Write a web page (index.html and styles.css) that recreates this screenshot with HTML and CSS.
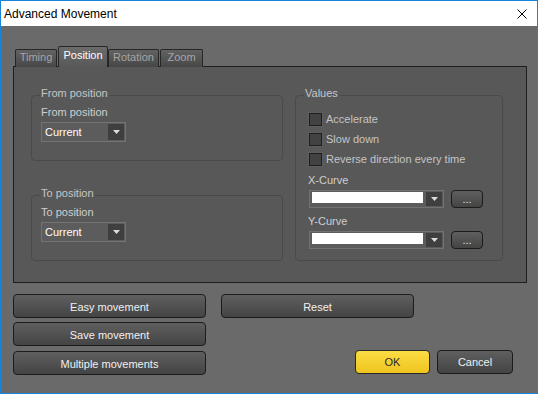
FILE: index.html
```html
<!DOCTYPE html>
<html>
<head>
<meta charset="utf-8">
<link rel="stylesheet" href="styles.css">
</head>
<body>
<div class="window">
  <div class="titlebar">
    <span class="title">Advanced Movement</span>
    <svg class="close" width="10" height="10" viewBox="0 0 10 10"><path d="M0.5 0.5L9.5 9.5M9.5 0.5L0.5 9.5" stroke="#000" stroke-width="1" fill="none"/></svg>
  </div>
  <div class="content">
    <div class="tabs">
      <div class="tab tab-timing">Timing</div>
      <div class="tab tab-position active">Position</div>
      <div class="tab tab-rotation">Rotation</div>
      <div class="tab tab-zoom">Zoom</div>
    </div>
    <div class="panel">
      <div class="col-left">
        <div class="group g-pos">
          <div class="legend">From position</div>
          <div class="label">From position</div>
          <div class="dropdown">
            <span class="dd-text">Current</span>
            <span class="dd-arrow"><svg width="7" height="4" viewBox="0 0 7 4"><path d="M0 0H7L3.5 4Z" fill="#dcdcdc"/></svg></span>
          </div>
        </div>
        <div class="group g-pos">
          <div class="legend">To position</div>
          <div class="label">To position</div>
          <div class="dropdown">
            <span class="dd-text">Current</span>
            <span class="dd-arrow"><svg width="7" height="4" viewBox="0 0 7 4"><path d="M0 0H7L3.5 4Z" fill="#dcdcdc"/></svg></span>
          </div>
        </div>
      </div>
      <div class="group g-values">
        <div class="legend legend-values">Values</div>
        <div class="checks">
          <div class="check-row"><span class="checkbox"></span><span class="check-label">Accelerate</span></div>
          <div class="check-row"><span class="checkbox"></span><span class="check-label">Slow down</span></div>
          <div class="check-row"><span class="checkbox"></span><span class="check-label">Reverse direction every time</span></div>
        </div>
        <div class="label curve-label">X-Curve</div>
        <div class="curve-row">
          <div class="combo">
            <span class="combo-field"><span class="combo-white"></span></span>
            <span class="dd-arrow combo-arrow"><svg width="7" height="4" viewBox="0 0 7 4"><path d="M0 0H7L3.5 4Z" fill="#dcdcdc"/></svg></span>
          </div>
          <div class="btn btn-dots">...</div>
        </div>
        <div class="label curve-label curve-label-y">Y-Curve</div>
        <div class="curve-row">
          <div class="combo">
            <span class="combo-field"><span class="combo-white"></span></span>
            <span class="dd-arrow combo-arrow"><svg width="7" height="4" viewBox="0 0 7 4"><path d="M0 0H7L3.5 4Z" fill="#dcdcdc"/></svg></span>
          </div>
          <div class="btn btn-dots">...</div>
        </div>
      </div>
    </div>
    <div class="buttons">
      <div class="btn-row">
        <div class="btn btn-wide">Easy movement</div>
        <div class="btn btn-wide">Reset</div>
      </div>
      <div class="btn-row row-2">
        <div class="btn btn-wide">Save movement</div>
      </div>
      <div class="btn-row row-3">
        <div class="btn btn-wide">Multiple movements</div>
        <div class="btn btn-ok">OK</div>
        <div class="btn btn-cancel">Cancel</div>
      </div>
    </div>
  </div>
</div>
</body>
</html>
```
FILE: styles.css
```css
* { box-sizing: border-box; }
html, body { margin: 0; padding: 0; }
body {
  width: 538px;
  height: 394px;
  overflow: hidden;
  font-family: "Liberation Sans", Arial, sans-serif;
  font-size: 11px;
}
.window {
  width: 538px;
  height: 394px;
  border: 1px solid #1883d7;
  background: #6a6a6a;
  display: flex;
  flex-direction: column;
}
.titlebar {
  height: 25px;
  flex: none;
  background: #fff;
  display: flex;
  align-items: center;
  justify-content: space-between;
  padding: 0 10px 0 3px;
}
.title {
  font-size: 12px;
  color: #000;
  line-height: 16px;
}
.close { display: block; margin-top: 1px; }
.content {
  flex: 1;
  padding: 20px 10px 0 12px;
}
.tabs {
  display: flex;
  align-items: flex-end;
  height: 21px;
  margin-bottom: -1px;
  padding-left: 2px;
  position: relative;
  z-index: 1;
}
.tab {
  height: 18px;
  border: 1px solid #262626;
  border-bottom: none;
  border-radius: 2px 2px 0 0;
  background: linear-gradient(#626262, #474747);
  color: #a6a6a6;
  text-align: center;
  line-height: 15px;
}
.tab-timing { width: 42px; margin-right: 1px; }
.tab-position { width: 50px; }
.tab-rotation { width: 51px; margin-right: 1px; }
.tab-zoom { width: 43px; }
.tab.active {
  height: 21px;
  color: #fff;
  background: linear-gradient(#6b6b6b, #585858);
  line-height: 17px;
}
.panel {
  height: 217px;
  border: 1px solid #1e1e1e;
  background: #585858;
  display: flex;
  gap: 12px;
  padding: 28px 0 0 17px;
}
.col-left {
  width: 252px;
  display: flex;
  flex-direction: column;
  gap: 34px;
}
.group {
  border: 1px solid #4a4a4a;
  border-radius: 4px;
}
.g-pos {
  height: 66px;
  padding: 0 9px;
}
.legend {
  width: max-content;
  margin: -9px 0 0 -1px;
  padding: 0 1px;
  background: #585858;
  line-height: 13px;
  color: #c6c6c6;
}
.label {
  margin-top: 6px;
  line-height: 13px;
  color: #cfcfcf;
}
.dropdown {
  margin-top: 3px;
  width: 85px;
  height: 20px;
  border: 1px solid #747474;
  padding: 1px;
  display: flex;
  background: #5c5c5c;
}
.dd-text {
  flex: 1;
  padding-left: 2px;
  line-height: 16px;
  color: #fff;
}
.dd-arrow {
  width: 16px;
  background: #3f3f3f;
  display: flex;
  align-items: center;
  justify-content: center;
}
.dd-arrow svg { display: block; }
.g-values {
  width: 208px;
  height: 166px;
  padding: 0 0 0 13px;
}
.legend-values { margin-left: -5px; }
.checks { margin-top: 9px; }
.check-row {
  height: 20px;
  display: flex;
  align-items: center;
  gap: 4px;
}
.checkbox {
  width: 13px;
  height: 13px;
  border: 1px solid #1e1e1e;
  background: #424242;
  box-shadow: 0 0 0 1px #5e5e5e;
}
.check-label {
  color: #c4c4c4;
  line-height: 20px;
}
.curve-label { margin-top: 5px; margin-left: -1px; }
.curve-label-y { margin-top: 7px; }
.curve-row {
  margin-top: 3px;
  display: flex;
  gap: 7px;
}
.combo {
  width: 135px;
  height: 18px;
  border: 1px solid #727272;
  padding: 1px;
  display: flex;
  background: #5c5c5c;
}
.combo-field {
  flex: 1;
  padding-left: 1px;
}
.combo-white {
  display: block;
  height: 11px;
  background: #fff;
}
.combo-arrow { margin-left: 3px; }
.btn {
  border: 1px solid #1c1c1c;
  border-radius: 4px;
  background: linear-gradient(#5f5f5f, #444444);
  color: #f0f0f0;
  text-align: center;
}
.btn-dots {
  width: 32px;
  height: 18px;
  line-height: 16px;
  color: #e8e8e8;
}
.buttons {
  margin-top: 11px;
  display: flex;
  flex-direction: column;
}
.btn-row {
  display: flex;
  gap: 15px;
}
.row-2 { margin-top: 4px; }
.row-3 { margin-top: 5px; gap: 0; }
.btn-wide {
  width: 193px;
  height: 24px;
  line-height: 22px;
  padding-top: 1px;
}
.btn-ok {
  width: 75px;
  height: 24px;
  margin-left: auto;
  margin-top: -1px;
  line-height: 22px;
  background: linear-gradient(#fbdc44, #efc51f);
  color: #2a2a2a;
  border-color: #2a2a2a;
}
.btn-cancel {
  width: 76px;
  height: 24px;
  margin-left: 7px;
  margin-right: 14px;
  margin-top: -1px;
  line-height: 22px;
}
```
